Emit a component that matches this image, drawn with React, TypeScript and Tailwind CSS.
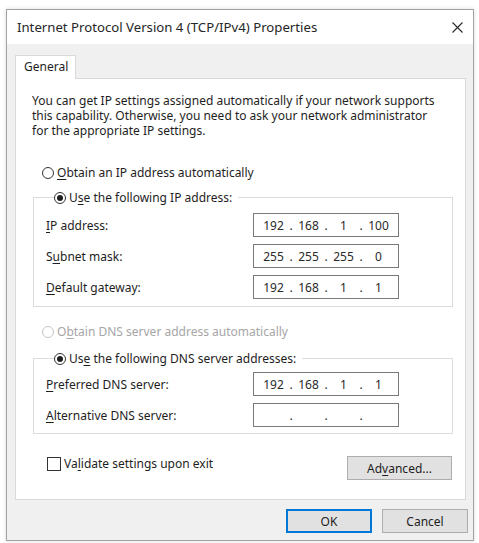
import React from "react";

function Radio({ checked = false, disabled = false }: { checked?: boolean; disabled?: boolean }) {
  return (
    <span
      className={
        "w-[12px] h-[12px] rounded-full border bg-white flex items-center justify-center shrink-0 " +
        (disabled ? "border-[#c4c4c4]" : "border-[#333333]")
      }
    >
      {checked && <span className="w-[6px] h-[6px] rounded-full bg-[#1e1e1e]" />}
    </span>
  );
}

function Acc({ before, key1, after }: { before: string; key1: string; after: string }) {
  return (
    <span className="whitespace-nowrap">
      {before}
      <u className="underline underline-offset-2">{key1}</u>
      {after}
    </span>
  );
}

function IpBox({ parts }: { parts: string[] }) {
  return (
    <div className="w-[146px] h-[24px] border border-[#7a7a7a] bg-white flex items-center px-[6px] text-[#2a2a2a]">
      {parts.map((p, i) => (
        <React.Fragment key={i}>
          {i > 0 && <span className="w-[8px] text-center">.</span>}
          <span className="w-[27px] text-center">{p}</span>
        </React.Fragment>
      ))}
    </div>
  );
}

function FieldRow({ label, parts, top = "mt-[7px]" }: { label: React.ReactNode; parts: string[]; top?: string }) {
  return (
    <div className={"flex items-center h-[24px] " + top}>
      <div className="w-[207px]">{label}</div>
      <IpBox parts={parts} />
    </div>
  );
}

function Button({ children, primary = false, w }: { children: React.ReactNode; primary?: boolean; w: string }) {
  return (
    <div
      className={
        "h-[24px] bg-[#e1e1e1] border flex items-center justify-center " +
        w +
        " " +
        (primary ? "border-[#0078d7] shadow-[inset_0_0_0_1px_#0078d7]" : "border-[#adadad]")
      }
    >
      {children}
    </div>
  );
}

export default function App() {
  return (
    <div className="w-[479px] h-[543px] bg-white pt-[9px] pl-[6px] text-[12px] leading-[15px] text-[#1e1e1e] font-['Noto_Sans',sans-serif]">
      <div className="w-[468px] h-[532px] border border-[#a3a3a3] shadow-[0_0_4px_rgba(0,0,0,0.15)] flex flex-col bg-[#f0f0f0]">
        {/* title bar */}
        <div className="h-[34px] bg-white flex items-center justify-between pl-[10px] pr-[10px] shrink-0">
          <span className="whitespace-nowrap text-[13.2px] text-[#262626]">Internet Protocol Version 4 (TCP/IPv4) Properties</span>
          <svg width="11" height="11" viewBox="0 0 11 11" className="shrink-0">
            <path d="M0.5 0.5 L10.5 10.5 M10.5 0.5 L0.5 10.5" stroke="#2a2a2a" strokeWidth="1.1" fill="none" />
          </svg>
        </div>

        {/* body */}
        <div className="flex-1 pl-[8px] pr-[7px] pt-[11px] flex flex-col">
          <div className="flex">
            <div className="relative z-10 w-[61px] h-[24px] bg-white border border-b-0 border-[#d9d9d9] pl-[8px] pt-[3px] -mb-px">
              General
            </div>
          </div>

          <div className="h-[422px] bg-white border border-[#d9d9d9] pl-[16px] pr-[12px] pt-[14px] flex flex-col">
            <p className="whitespace-nowrap">
              You can get IP settings assigned automatically if your network supports
              <br />
              this capability. Otherwise, you need to ask your network administrator
              <br />
              for the appropriate IP settings.
            </p>

            <div className="mt-[27px] ml-[10px] flex items-center gap-[3px] h-[15px]">
              <Radio />
              <Acc before="" key1="O" after="btain an IP address automatically" />
            </div>

            <fieldset className="mt-[10px] ml-[1px] border border-[#dcdcdc] pl-[12px] pb-[7px]">
              <legend className="ml-[8px] pr-[6px] flex items-center gap-[3px] h-[15px]">
                <Radio checked />
                <Acc before="U" key1="s" after="e the following IP address:" />
              </legend>
              <FieldRow top="mt-[8px]" label={<Acc before="" key1="I" after="P address:" />} parts={["192", "168", "1", "100"]} />
              <FieldRow label={<Acc before="S" key1="u" after="bnet mask:" />} parts={["255", "255", "255", "0"]} />
              <FieldRow label={<Acc before="" key1="D" after="efault gateway:" />} parts={["192", "168", "1", "1"]} />
            </fieldset>

            <div className="mt-[17px] ml-[10px] flex items-center gap-[3px] h-[15px] text-[#a6a6a6]">
              <Radio disabled />
              <Acc before="O" key1="b" after="tain DNS server address automatically" />
            </div>

            <fieldset className="mt-[12px] ml-[1px] border border-[#dcdcdc] pl-[12px] pb-[6px]">
              <legend className="ml-[8px] pr-[6px] flex items-center gap-[3px] h-[15px]">
                <Radio checked />
                <Acc before="Us" key1="e" after=" the following DNS server addresses:" />
              </legend>
              <FieldRow top="mt-[6px]" label={<Acc before="" key1="P" after="referred DNS server:" />} parts={["192", "168", "1", "1"]} />
              <FieldRow label={<Acc before="" key1="A" after="lternative DNS server:" />} parts={["", "", "", ""]} />
            </fieldset>

            <div className="mt-[22px] flex items-start justify-between">
              <div className="ml-[15px] flex items-center gap-[3px] h-[15px]">
                <span className="w-[14px] h-[14px] border border-[#333333] bg-white shrink-0" />
                <Acc before="Va" key1="l" after="idate settings upon exit" />
              </div>
              <div className="mr-[1px]">
                <Button w="w-[105px]">
                  <Acc before="Ad" key1="v" after="anced..." />
                </Button>
              </div>
            </div>
          </div>

          <div className="mt-[9px] -mr-[2px] flex justify-end gap-[10px]">
            <Button primary w="w-[86px]">OK</Button>
            <Button w="w-[86px]">Cancel</Button>
          </div>
        </div>
      </div>
    </div>
  );
}
